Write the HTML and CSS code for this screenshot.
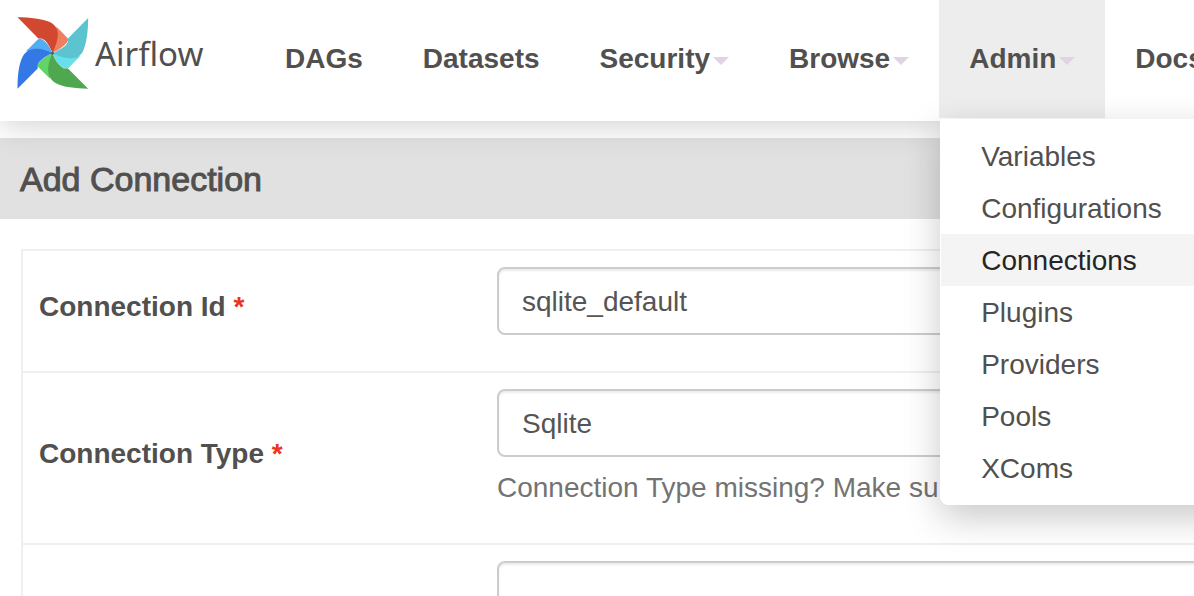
FILE: index.html
```html
<!DOCTYPE html>
<html lang="en">
<head>
<meta charset="utf-8">
<title>Add Connection - Airflow</title>
<link rel="stylesheet" href="styles.css">
</head>
<body>
<div class="page">
  <header class="navbar">
    <a class="brand" href="#">
      <svg class="brand-mark" viewBox="53 53 213 214" aria-hidden="true">
        <path fill="#f07f61" d="M170 82L202 115Q207 120 201 129Q190 143 158 161Z"/>
        <path fill="#d2472f" d="M54 54C90 54 130 59 150 68C188 86 173 128 158 161C148 136 137 117 122 117L116 117Z"/>
        <path fill="#68e0ec" d="M158 161L240 170L207 203Q200 210 190 204C176 196 167 183 158 161Z"/>
        <path fill="#5bc4d0" d="M264 56C264 95 259 130 250 152C234 190 190 176 158 161C182 149 204 136 204 124L204 117Z"/>
        <path fill="#62d466" d="M158 161L150 236L117 203Q110 197 118 189C127 177 140 169 158 161Z"/>
        <path fill="#4fa850" d="M264 266C224 265 190 262 170 251C134 232 144 190 158 161C166 183 178 199 192 206L204 206Z"/>
        <path fill="#51aef5" d="M158 161L79 155L112 122Q120 114 130 121C143 130 150 142 158 161Z"/>
        <path fill="#3478e5" d="M54 266C54 226 58 193 69 171C88 136 130 146 158 161C134 170 114 187 114 198L114 206Z"/>
        <circle cx="158" cy="161" r="4" fill="#51504f"/>
      </svg>
      <span class="brand-name">Airflow</span>
    </a>
    <nav>
      <ul class="nav">
        <li><a class="nav-link" href="#">DAGs</a></li>
        <li><a class="nav-link" href="#">Datasets</a></li>
        <li><a class="nav-link" href="#">Security<span class="caret"></span></a></li>
        <li><a class="nav-link" href="#">Browse<span class="caret"></span></a></li>
        <li class="open">
          <a class="nav-link" href="#">Admin<span class="caret"></span></a>
          <ul class="menu">
            <li><a href="#">Variables</a></li>
            <li><a href="#">Configurations</a></li>
            <li><a class="active" href="#">Connections</a></li>
            <li><a href="#">Plugins</a></li>
            <li><a href="#">Providers</a></li>
            <li><a href="#">Pools</a></li>
            <li><a href="#">XComs</a></li>
          </ul>
        </li>
        <li><a class="nav-link" href="#">Docs</a></li>
      </ul>
    </nav>
  </header>
  <main>
    <h1 class="title">Add Connection</h1>
    <form class="form">
      <table class="fields">
        <tr>
          <th><label for="conn-id">Connection Id <span class="required">*</span></label></th>
          <td><input class="control" id="conn-id" type="text" value="sqlite_default"></td>
        </tr>
        <tr>
          <th><label for="conn-type">Connection Type <span class="required">*</span></label></th>
          <td>
            <select class="control" id="conn-type"><option>Sqlite</option></select>
            <p class="help">Connection Type missing? Make sure</p>
          </td>
        </tr>
        <tr>
          <th></th>
          <td><input class="control" type="text" aria-label="Description"></td>
        </tr>
      </table>
    </form>
  </main>
</div>
</body>
</html>
```

FILE: styles.css
```css
* {
  box-sizing: border-box;
}

html {
  overflow: hidden;
}

body {
  margin: 0;
  background: #fff;
  color: #51504f;
  font: 28px/40px "Liberation Sans", Arial, sans-serif;
}

a {
  color: inherit;
  text-decoration: none;
}

ul {
  margin: 0;
  padding: 0;
  list-style: none;
}

.page {
  min-width: 1440px;
}

.navbar {
  position: relative;
  z-index: 1;
  display: flex;
  align-items: flex-start;
  padding: 0 0 3px 17px;
  background: #fff;
  box-shadow: 0 4px 30px rgba(0, 0, 0, 0.19);
}

.brand {
  display: flex;
  align-items: center;
  gap: 6px;
  width: 238px;
  height: 108px;
}

.brand-mark {
  width: 72px;
  height: 72px;
  margin-bottom: 2px;
}

.brand-name {
  font: 33px/40px "Noto Sans", sans-serif;
}

.nav {
  display: flex;
}

.nav-link {
  display: flex;
  align-items: center;
  height: 118px;
  padding: 0 30px;
  font-weight: bold;
}

.caret {
  margin: 4px 0 0 3px;
  border: 8px solid transparent;
  border-top-color: #e0d4e4;
  border-bottom: 0;
}

.open {
  position: relative;
  background: #ededed;
}

.menu {
  position: absolute;
  top: 119px;
  left: 1px;
  min-width: 320px;
  padding: 10px 0;
  border: 1px solid #fff;
  border-radius: 0 0 8px 8px;
  background: #fff;
  box-shadow: 0 12px 36px rgba(0, 0, 0, 0.22);
}

.menu a {
  display: block;
  padding: 7px 40px 5px;
}

.menu .active {
  background: #f4f4f4;
  color: #252525;
}

.title {
  margin: 17px 0 30px;
  padding: 21px 20px 19px;
  background: #e1e1e1;
  font-size: 34px;
  line-height: 41px;
  font-weight: normal;
  -webkit-text-stroke: 1px #51504f;
}

.form {
  padding: 0 21px;
}

.fields {
  width: 100%;
  border: 2px solid #efefef;
  border-collapse: collapse;
}

.fields tr {
  border-top: 2px solid #efefef;
}

.fields th {
  width: 459px;
  padding: 0 16px 8px;
  text-align: left;
}

.fields td {
  padding: 16px 16px 36px;
}

.required {
  color: #ee3322;
}

.control {
  display: block;
  width: 100%;
  height: 68px;
  padding: 2px 23px 0;
  border: 2px solid #ccc;
  border-radius: 8px;
  background: #fff;
  box-shadow: inset 0 2px 2px rgba(0, 0, 0, 0.08);
  color: #555;
  font: inherit;
  appearance: none;
}

.help {
  margin: 11px 0 -1px;
  color: #737373;
}
```
